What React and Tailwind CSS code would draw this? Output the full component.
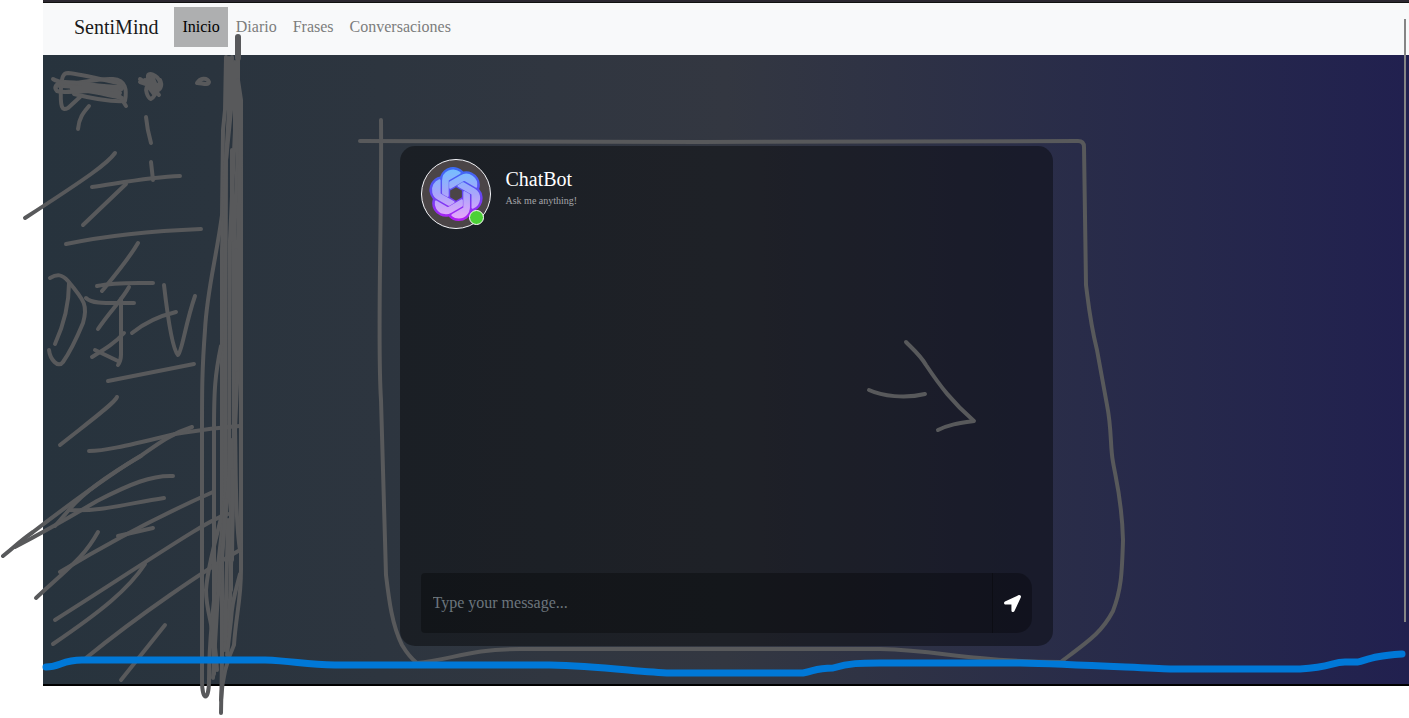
import React from "react";
import { FaLocationArrow } from "react-icons/fa";

const LOGO_OUTER =
  "M22.2819 9.8211a5.9847 5.9847 0 0 0-.5157-4.9108 6.0462 6.0462 0 0 0-6.5098-2.9A6.0651 6.0651 0 0 0 4.9807 4.1818a5.9847 5.9847 0 0 0-3.9977 2.9 6.0462 6.0462 0 0 0 .7427 7.0966 5.98 5.98 0 0 0 .511 4.9107 6.051 6.051 0 0 0 6.5146 2.9001A5.9847 5.9847 0 0 0 13.2599 24a6.0557 6.0557 0 0 0 5.7718-4.2058 5.9894 5.9894 0 0 0 3.9977-2.9001 6.0557 6.0557 0 0 0-.7475-7.0729z";
const LOGO_PETALS =
  "M13.2599 22.4292a4.4755 4.4755 0 0 1-2.8764-1.0408l.1419-.0804 4.7783-2.7582a.7948.7948 0 0 0 .3927-.6813v-6.7369l2.02 1.1686a.071.071 0 0 1 .038.052v5.5826a4.504 4.504 0 0 1-4.4945 4.4944zM3.5992 18.3038a4.4708 4.4708 0 0 1-.5346-3.0137l.142.0852 4.783 2.7582a.7712.7712 0 0 0 .7806 0l5.8428-3.3685v2.3324a.0804.0804 0 0 1-.0332.0615L9.74 19.9502a4.4992 4.4992 0 0 1-6.1408-1.6464zM2.3408 7.8956a4.485 4.485 0 0 1 2.3655-1.9728V11.6a.7664.7664 0 0 0 .3879.6765l5.8144 3.3543-2.0201 1.1685a.0757.0757 0 0 1-.071 0l-4.8303-2.7865A4.504 4.504 0 0 1 2.3408 7.872zm16.5963 3.8558L13.1038 8.364 15.1192 7.2a.0757.0757 0 0 1 .071 0l4.8303 2.7913a4.4944 4.4944 0 0 1-.6765 8.1042v-5.6772a.79.79 0 0 0-.407-.667zm2.0107-3.0231l-.142-.0852-4.7735-2.7818a.7759.7759 0 0 0-.7854 0L9.409 9.2297V6.8974a.0662.0662 0 0 1 .0284-.0615l4.8303-2.7866a4.4992 4.4992 0 0 1 6.6802 4.66zM8.3065 12.863l-2.02-1.1638a.0804.0804 0 0 1-.038-.0567V6.0742a4.4992 4.4992 0 0 1 7.3757-3.4537l-.142.0805L8.704 5.459a.7948.7948 0 0 0-.3927.6813z";
const LOGO_CENTER =
  "M9.4041 10.4976l2.602-1.4998 2.6069 1.4998v2.9994l-2.5974 1.4997-2.6067-1.4997z";

function BotLogo() {
  return (
    <svg viewBox="0 0 24 24" className="h-[54px] w-[54px]" aria-hidden="true">
      <defs>
        <linearGradient id="edge" x1="0" y1="0" x2="0" y2="24" gradientUnits="userSpaceOnUse">
          <stop offset="0" stopColor="#3a6cf6" />
          <stop offset="0.5" stopColor="#6448f2" />
          <stop offset="1" stopColor="#b41cf5" />
        </linearGradient>
        <linearGradient id="petal" x1="0" y1="0" x2="0" y2="24" gradientUnits="userSpaceOnUse">
          <stop offset="0" stopColor="#6fc0ff" />
          <stop offset="0.5" stopColor="#a9a5fb" />
          <stop offset="1" stopColor="#eda6fa" />
        </linearGradient>
      </defs>
      <path d={LOGO_OUTER} fill="url(#edge)" />
      <path d={LOGO_PETALS} fill="url(#petal)" stroke="url(#petal)" strokeWidth="0.9" strokeLinejoin="round" />
      <path d={LOGO_CENTER} fill="#4b4547" />
    </svg>
  );
}

const INK = [
  // header doodles
  "M53 79C63 86 110 89 117 92L126 106",
  "M74 94C90 98 110 102 125 101C127 90 126 80 113 79C100 78 86 82 56 86",
  "M80 97L68 108C62 111 60 108 61 87C62 77 63 73 68 73C80 74 100 79 118 83C124 86 124 91 115 90",
  "M57 91C53 87 57 82 65 82C80 82 100 87 120 87M57 91C67 94 97 90 117 89M62 86C80 87 100 92 118 95M66 92C85 88 100 94 122 98M72 89C90 84 110 87 120 93",
  "M140 79C145 82 153 87 159 95M140 82L149 85C143 88 148 98 151 99C156 97 158 87 160 82C157 74 148 72 148 76C147 84 150 90 155 92M145 80L158 89M160 80C163 86 160 90 156 91M150 78L154 86M152 76L157 88M148 86L154 94",
  "M197 83C200 78 207 77 209 82C208 86 202 83 197 83",
  "M89 106C83 113 79 118 78 129",
  "M146 117C147 128 149 136 151 143",
  "M151 162L153 180",
  "M92 187C120 183 150 177 180 176",
  "M115 153C108 163 90 176 25 218",
  "M126 184L83 225",
  "M66 244C100 237 150 231 201 229",
  // lettering
  "M138 243C128 260 116 274 102 291",
  "M97 286C115 282 135 283 153 283",
  "M50 278C57 274 62 274 68 281C85 301 88 306 83 323C78 335 70 352 63 362C58 369 50 359 49 350",
  "M69 283C69 300 65 322 55 344",
  "M86 298C92 304 105 303 134 303",
  "M129 287C122 300 110 311 98 329",
  "M121 299V355C121 360 120 362 118 365M118 361L95 350",
  "M124 333C115 343 105 349 92 357",
  "M132 333C143 324 155 317 176 312",
  "M164 285C168 320 173 350 178 355C182 352 185 325 195 296",
  "M108 381L194 364",
  "M117 397C115 403 85 425 60 445",
  // hatching
  "M89 451C105 451 125 446 175 434C200 430 225 427 240 426",
  "M192 427C170 434 155 446 142 455C120 468 75 500 33 532C20 541 12 549 3 556",
  "M141 456C115 471 85 490 68 511L55 526",
  "M173 476C152 475 130 484 97 501C70 517 38 535 15 547",
  "M69 510C100 512 130 503 164 498",
  "M213 492C170 511 110 542 60 572",
  "M118 536L153 528",
  "M98 532C84 557 72 565 36 598",
  "M228 514C210 518 150 560 55 620",
  "M145 564C128 590 100 612 53 644",
  "M240 550C205 570 140 614 86 658",
  "M165 625L121 680",
  // sidebar edge
  "M226 57L225 110L223 130L222 215C216 260 207 290 205 330C202 370 202 390 202 430V680C202 702 209 702 209 680C209 620 220 560 225 500",
  "M232 57L231 110L225 170L222 250V660L221 713",
  "M238 37V80L241 100V570C241 600 236 615 234 645C227 660 222 680 221 700",
  "M229 58V110L226 160L225 500C222 520 208 560 206 590C206 615 215 625 217 670",
  "M235 62V130L230 240L229 480C226 520 220 560 217 610L213 678",
  "M238 80V150L234 240V470L230 600L225 650",
  "M241 130L238 240V360L235 430C236 470 235 520 240 550",
  "M221 346C215 375 214 390 214 430V674",
  "M240 574C236 590 232 600 231 620L227 655",
  "M232 150V240M236 250V370M231 440V590M228 520L225 640",
  "M226 500L222 560M233 470L232 560",
  // frame round the chat panel
  "M381 120C382 220 377 340 381 400L386 575C389 600 392 625 402 645C408 655 413 660 417 663",
  "M360 141L700 142L1078 141Q1084 141 1084 147L1086 285C1088 300 1090 322 1097 350L1107 405C1112 430 1110 447 1113 462C1116 480 1122 500 1123 540C1122 575 1121 590 1113 611C1102 632 1090 640 1062 661",
  "M417 663C450 660 470 649 520 649H880C925 650 950 656 980 658C1010 661 1035 662 1062 662",
  // pointer
  "M906 342C914 350 921 356 926 365C940 386 953 403 974 421C960 423 950 424 938 430",
  "M869 390C882 396 905 399 925 394",
];

function Annotations() {
  return (
    <svg
      className="pointer-events-none absolute left-0 top-0"
      width="1409"
      height="718"
      viewBox="0 0 1409 718"
      fill="none"
      strokeLinecap="round"
      strokeLinejoin="round"
      aria-hidden="true"
    >
      <g stroke="#58595b" strokeWidth="4">
        {INK.map((d) => (
          <path key={d} d={d} />
        ))}
      </g>
      <path d="M238 37V58" stroke="#58595b" strokeWidth="6" />
      <path
        d="M46 667C60 667 62 660 82 660H265C295 661 305 665 335 665H550C600 666 640 672 670 673H803C815 671 815 668 833 668C850 663 860 663 880 663H1020C1070 664 1140 668 1170 669H1300C1332 667 1332 662 1345 662H1358C1372 658 1375 656 1402 654"
        stroke="#0078d7"
        strokeWidth="7"
      />
    </svg>
  );
}

const LINKS = ["Inicio", "Diario", "Frases", "Conversaciones"];

export default function App() {
  return (
    <div className="relative min-h-screen overflow-hidden bg-white pl-[43px] font-['Liberation_Serif',serif] text-base">
      <div className="h-[3px] border-b border-[#111111] bg-[#2b2730]" />
      <nav className="flex h-[52px] items-center bg-[#f8f9fa] pb-1 pl-[31px]">
        <a href="#" className="mr-4 text-xl leading-7 text-[#191919]">
          SentiMind
        </a>
        <ul className="flex">
          {LINKS.map((label, i) => (
            <li key={label}>
              <a
                href="#"
                className={
                  i === 0
                    ? "block bg-[#aeafb0] p-2 leading-6 text-black"
                    : "block p-2 leading-6 text-[#7c7d7d]"
                }
              >
                {label}
              </a>
            </li>
          ))}
        </ul>
      </nav>

      <main className="border-b-2 border-black bg-linear-to-r from-[#27333d] via-[#333741] to-[#21204f] pb-[38px] pt-[91px]">
        <section className="mx-auto flex h-[500px] w-full max-w-[653px] flex-col justify-between rounded-[15px] bg-black/40 px-[21px] py-[13px]">
          <header className="flex gap-[15px]">
            <div className="relative flex size-[70px] items-center justify-center rounded-full border border-[#f5f6fa] bg-[#4b4547]">
              <BotLogo />
              <span className="absolute bottom-[3px] right-[6px] size-[15px] rounded-full border border-white bg-[#4cd137]" />
            </div>
            <div className="pt-2">
              <h1 className="text-xl leading-6 text-white">ChatBot</h1>
              <p className="pt-0.5 text-[10px] leading-[15px] text-white/60">Ask me anything!</p>
            </div>
          </header>
          <form className="flex h-[60px]" onSubmit={(e) => e.preventDefault()}>
            <input
              type="text"
              aria-label="Message"
              placeholder="Type your message..."
              className="min-w-0 flex-1 rounded-l bg-black/30 px-3 text-white outline-none placeholder:text-[#6c757d]"
            />
            <button
              type="submit"
              aria-label="Send"
              className="flex w-10 items-center justify-center rounded-r-[15px] border-l border-black/30 bg-black/30 text-white"
            >
              <FaLocationArrow className="size-[17px]" />
            </button>
          </form>
        </section>
      </main>
      <div className="absolute right-[3px] top-[19px] h-[603px] w-[2px] bg-[#858585]" />
      <Annotations />
    </div>
  );
}
